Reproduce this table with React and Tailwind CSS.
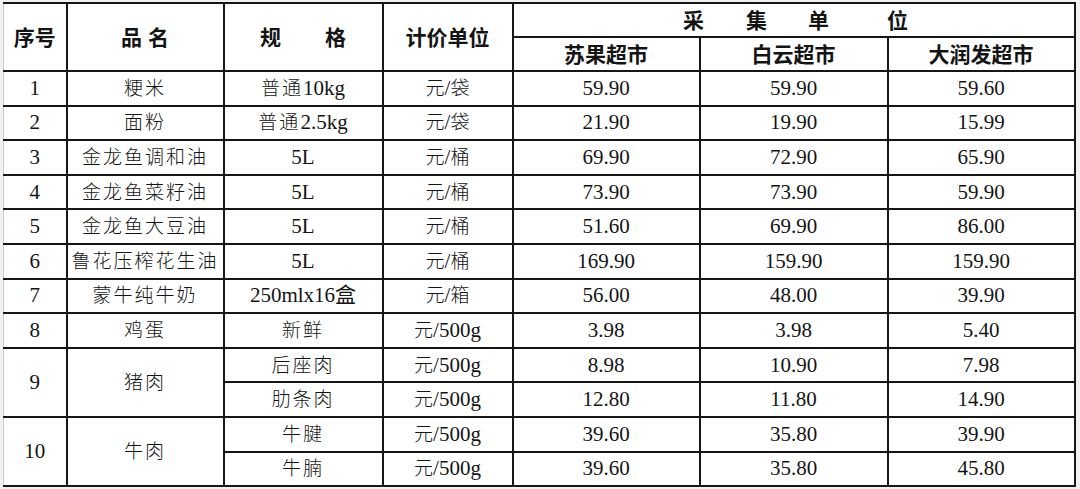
import React from "react";

const rows = [
  { no: "1", name: "粳米", spec: "普通10kg", unit: "元/袋", p: ["59.90", "59.90", "59.60"] },
  { no: "2", name: "面粉", spec: "普通2.5kg", unit: "元/袋", p: ["21.90", "19.90", "15.99"] },
  { no: "3", name: "金龙鱼调和油", spec: "5L", unit: "元/桶", p: ["69.90", "72.90", "65.90"] },
  { no: "4", name: "金龙鱼菜籽油", spec: "5L", unit: "元/桶", p: ["73.90", "73.90", "59.90"] },
  { no: "5", name: "金龙鱼大豆油", spec: "5L", unit: "元/桶", p: ["51.60", "69.90", "86.00"] },
  { no: "6", name: "鲁花压榨花生油", spec: "5L", unit: "元/桶", p: ["169.90", "159.90", "159.90"] },
  { no: "7", name: "蒙牛纯牛奶", spec: "250mlx16盒", unit: "元/箱", p: ["56.00", "48.00", "39.90"] },
  { no: "8", name: "鸡蛋", spec: "新鲜", unit: "元/500g", p: ["3.98", "3.98", "5.40"] },
];

const groups = [
  {
    no: "9",
    name: "猪肉",
    items: [
      { spec: "后座肉", unit: "元/500g", p: ["8.98", "10.90", "7.98"] },
      { spec: "肋条肉", unit: "元/500g", p: ["12.80", "11.80", "14.90"] },
    ],
  },
  {
    no: "10",
    name: "牛肉",
    items: [
      { spec: "牛腱", unit: "元/500g", p: ["39.60", "35.80", "39.90"] },
      { spec: "牛腩", unit: "元/500g", p: ["39.60", "35.80", "45.80"] },
    ],
  },
];

const th = "border-2 border-[#161616] text-center align-middle font-bold text-[21px] text-[#141414] p-0";
const td = "border-2 border-[#161616] text-center align-middle text-[21px] text-[#141414] p-0 leading-none";
const cn = "tracking-[2px] text-[19px] font-light";
const edge = "border-l border-l-[#c9c9c9]";

const Prices = ({ p }) =>
  p.map((v, i) => (
    <td key={i} className={td}>
      {v}
    </td>
  ));

// 规格 cell: Chinese part in CJK spacing, latin part plain
const Spec = ({ spec }) => {
  if (spec.startsWith("普通")) {
    return (
      <>
        <span className={cn}>普通</span>
        {spec.slice(2)}
      </>
    );
  }
  if (/[a-zA-Z0-9]/.test(spec)) return spec;
  return <span className={cn}>{spec}</span>;
};

// 计价单位: 元 / 单位
const Unit = ({ unit }) => {
  const rest = unit.slice(2);
  const latin = /[0-9a-z]/.test(rest);
  return (
    <>
      <span className="text-[19px] font-light">元</span>/
      <span className={latin ? "" : "text-[19px] font-light"}>{rest}</span>
    </>
  );
};

export default function App() {
  return (
    <div className="w-[1080px] h-[489px] bg-[#f1f1f1] overflow-hidden pl-[3px] pt-[2px]">
      <table
        className="table-fixed border-collapse w-[1071px] bg-white"
        style={{ fontFamily: '"Liberation Serif", "Noto Sans CJK SC", serif' }}
      >
        <colgroup>
          <col className="w-[63px]" />
          <col className="w-[157px]" />
          <col className="w-[159px]" />
          <col className="w-[130px]" />
          <col className="w-[187px]" />
          <col className="w-[188px]" />
          <col className="w-[187px]" />
        </colgroup>
        <thead style={{ fontFamily: '"Noto Sans CJK SC", sans-serif' }}>
          <tr className="h-[34px]">
            <th rowSpan={2} className={`${th} ${edge}`}>序号</th>
            <th rowSpan={2} className={th}>
              <span className="tracking-[6px] pl-[6px]">品名</span>
            </th>
            <th rowSpan={2} className={th}>
              <div className="flex justify-center gap-[44px]">
                <span>规</span>
                <span>格</span>
              </div>
            </th>
            <th rowSpan={2} className={th}>计价单位</th>
            <th colSpan={3} className={th}>
              <div className="flex justify-center pl-[4px]">
                <span>采</span>
                <span className="ml-[42px]">集</span>
                <span className="ml-[41px]">单</span>
                <span className="ml-[58px]">位</span>
              </div>
            </th>
          </tr>
          <tr className="h-[34px]">
            <th className={th}>苏果超市</th>
            <th className={th}>白云超市</th>
            <th className={th}>大润发超市</th>
          </tr>
        </thead>
        <tbody>
          {rows.map((r) => (
            <tr key={r.no} className="h-[34.6px]">
              <td className={`${td} ${edge}`}>{r.no}</td>
              <td className={td}>
                <span className={cn}>{r.name}</span>
              </td>
              <td className={td}>
                <Spec spec={r.spec} />
              </td>
              <td className={td}>
                <Unit unit={r.unit} />
              </td>
              <Prices p={r.p} />
            </tr>
          ))}
          {groups.map((g) =>
            g.items.map((it, i) => (
              <tr key={g.no + i} className="h-[34.6px]">
                {i === 0 && (
                  <>
                    <td rowSpan={2} className={`${td} ${edge}`}>{g.no}</td>
                    <td rowSpan={2} className={td}>
                      <span className={cn}>{g.name}</span>
                    </td>
                  </>
                )}
                <td className={td}>
                  <Spec spec={it.spec} />
                </td>
                <td className={td}>
                  <Unit unit={it.unit} />
                </td>
                <Prices p={it.p} />
              </tr>
            ))
          )}
        </tbody>
      </table>
    </div>
  );
}
